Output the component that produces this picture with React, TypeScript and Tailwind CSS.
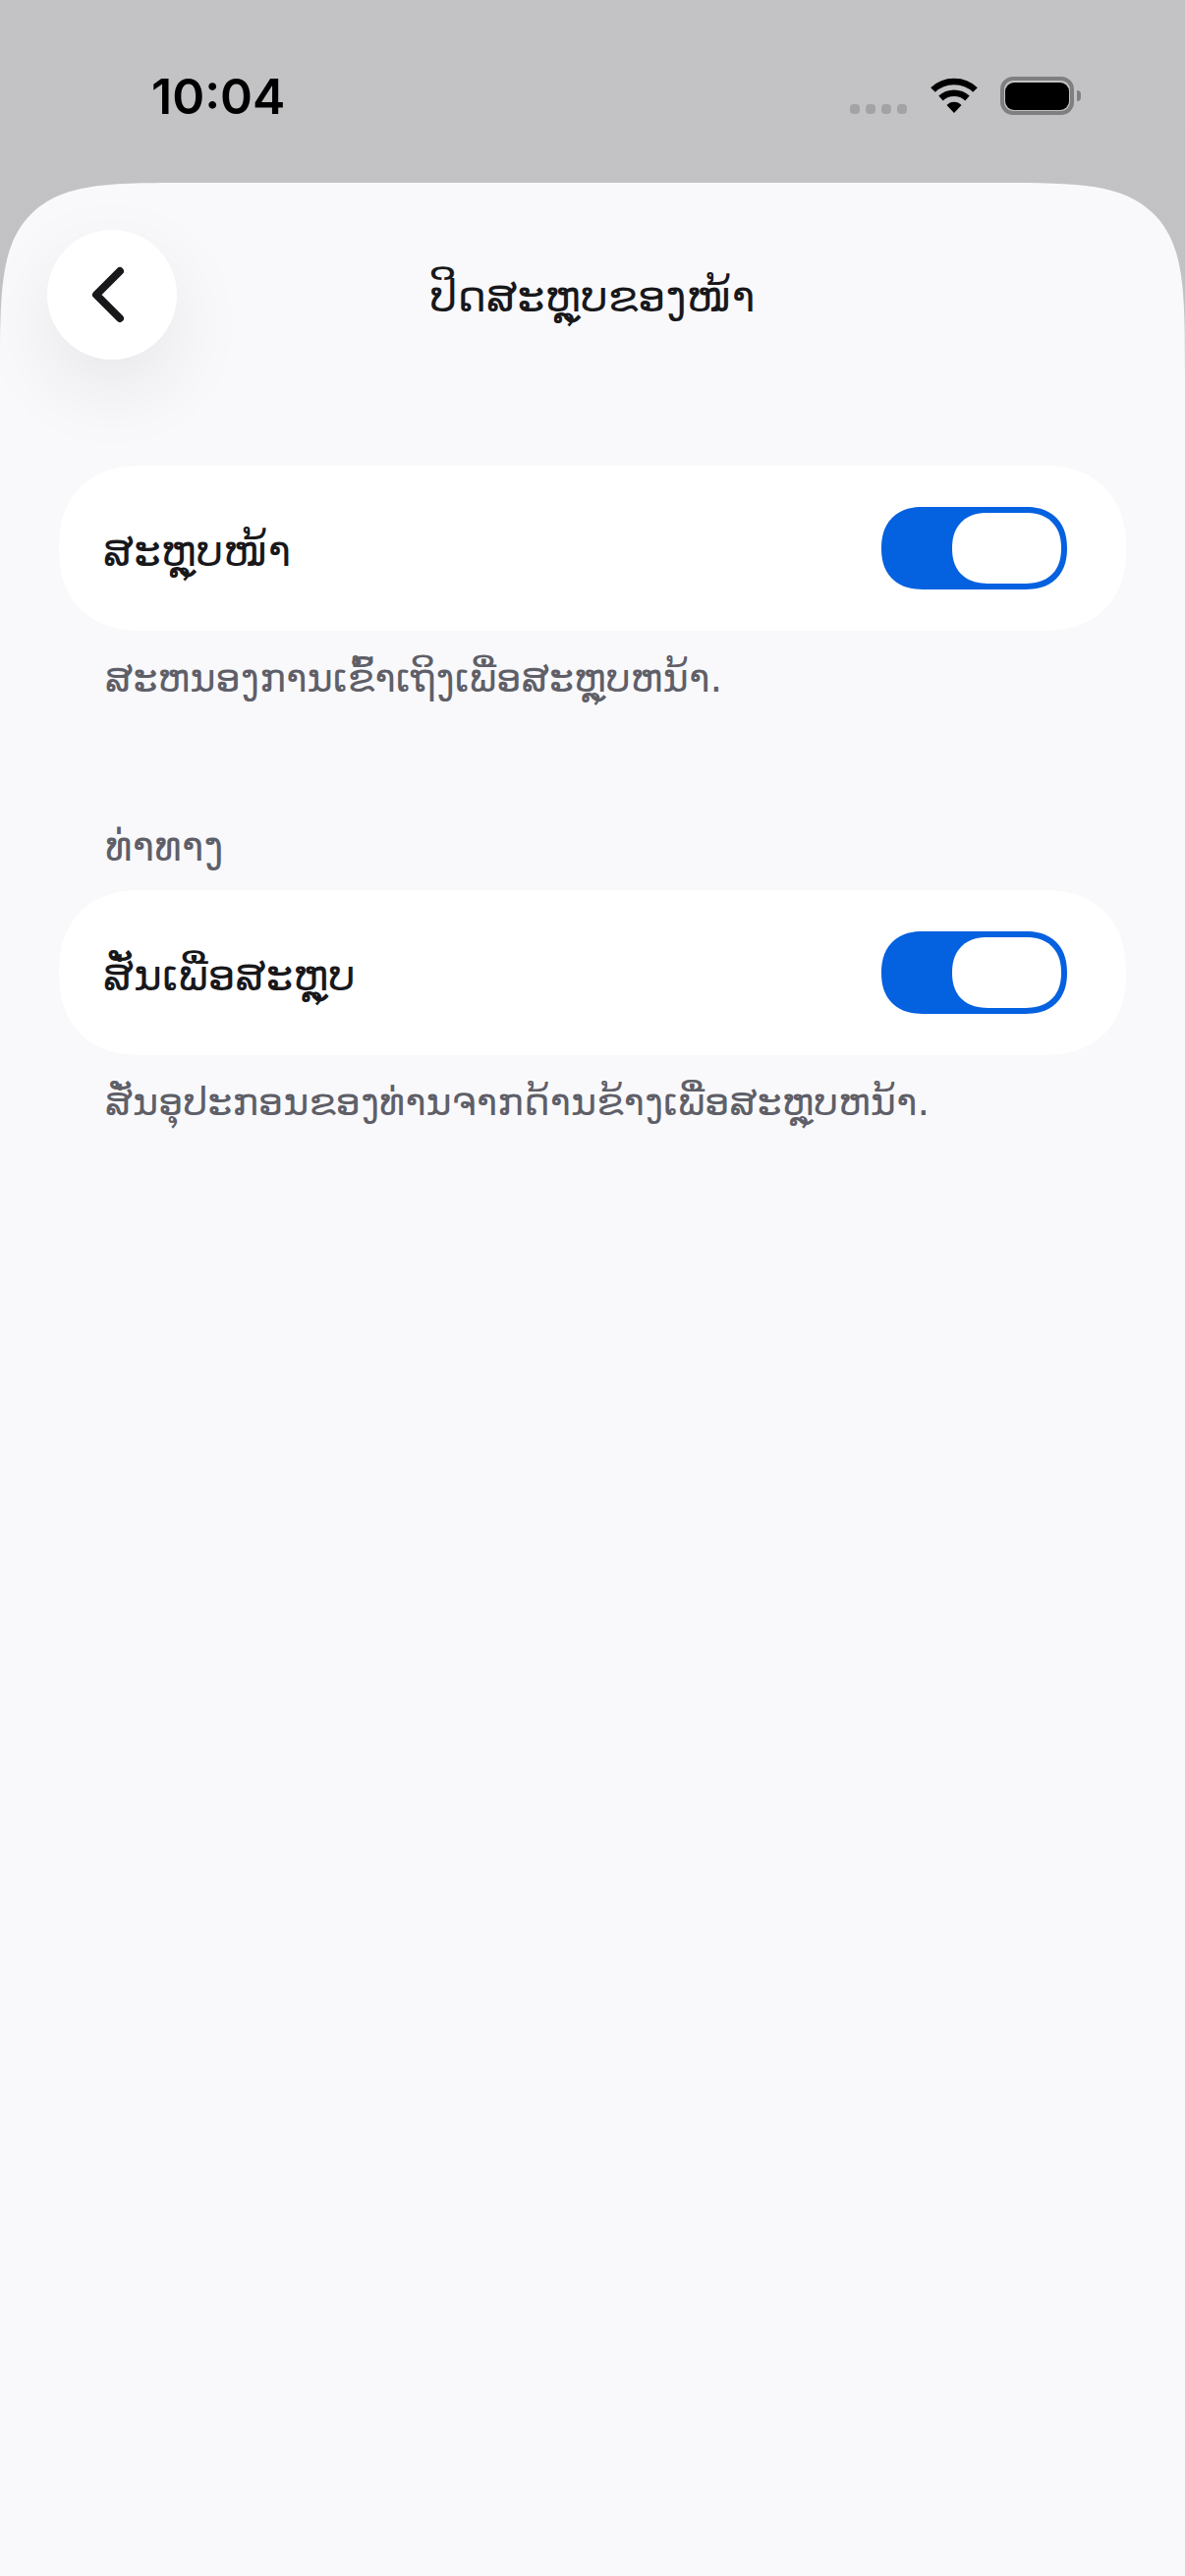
import { ChevronLeft } from "lucide-react";

const font = "font-['DejaVu_Sans',sans-serif]";

function Toggle() {
  return (
    <div className="flex h-[84px] w-[189px] items-center justify-end rounded-[42px] bg-[#0461e0] pr-[6px] [corner-shape:superellipse(1.2)]">
      <div className="h-[72px] w-[111px] rounded-[36px] bg-white [corner-shape:superellipse(1.2)]" />
    </div>
  );
}

function ToggleCard({ label }: { label: string }) {
  return (
    <div className="flex h-[168px] items-center justify-between rounded-[84px] bg-white pl-[45px] pr-[60px] [corner-shape:superellipse(1.2)]">
      <span className="pt-[6px] text-[44px] leading-[60px] text-[#18181b]">{label}</span>
      <Toggle />
    </div>
  );
}

function StatusBar() {
  return (
    <div className="flex h-[186px] items-start justify-between pl-[154px] pr-[106px] pt-[68px]">
      <span className="font-['Inter',sans-serif] text-[50px] font-semibold leading-[60px] text-black">10:04</span>
      <div className="flex items-start pt-[10px]">
        <div className="mt-[28px] flex gap-[6px]">
          <div className="h-[10px] w-[10px] rounded-[4px] bg-[#a3a3a5]" />
          <div className="h-[10px] w-[10px] rounded-[4px] bg-[#a3a3a5]" />
          <div className="h-[10px] w-[10px] rounded-[4px] bg-[#a3a3a5]" />
          <div className="h-[10px] w-[10px] rounded-[4px] bg-[#a3a3a5]" />
        </div>
        <svg className="ml-[23px]" width="50" height="37" viewBox="0 0 50 37">
          <path d="M3.5 13.5C15 2 35 2 46.5 13.5" fill="none" stroke="#000" strokeWidth="6.5" />
          <path d="M11.5 22C19 15 31 15 38.5 22" fill="none" stroke="#000" strokeWidth="6.5" />
          <path d="M17.5 29C21 24.5 29 24.5 32.5 29L25 37Z" fill="#000" />
        </svg>
        <div className="ml-[22px] flex h-[39px] w-[75px] items-center justify-center rounded-[13px] border-[4px] border-[#7f7f81]">
          <div className="h-[28px] w-[65px] rounded-[9px] bg-black" />
        </div>
        <div className="ml-[3px] mt-[14px] h-[11px] w-[4px] rounded-r-full bg-[#7f7f81]" />
      </div>
    </div>
  );
}

export default function App() {
  return (
    <div className={`h-[2622px] w-[1206px] overflow-hidden bg-gradient-to-b from-[#c3c3c5] to-[#bababc] ${font}`}>
      <StatusBar />
      <div className="h-[2436px] rounded-t-[200px] bg-[#f9f9fc] px-[60px] pt-[48px] [corner-shape:squircle]">
        <div className="relative flex h-[132px] items-center justify-center">
          <div className="absolute left-[-12px] top-0 flex h-[132px] w-[132px] items-center justify-center rounded-full bg-white shadow-[0_30px_80px_rgba(0,0,0,0.08)]">
            <ChevronLeft size={96} strokeWidth={2} className="mr-[8px] text-[#18181b]" />
          </div>
          <h1 className="pt-[4px] text-[44.5px] font-normal leading-[60px] text-[#18181b]">ປິດສະຫຼຸບຂອງໜ້າ</h1>
        </div>

        <div className="mt-[108px]">
          <ToggleCard label="ສະຫຼຸບໜ້າ" />
          <p className="mt-[18px] pl-[47px] text-[40px] leading-[60px] text-[#5f5f68]">ສະຫນອງການເຂົ້າເຖິງເພື່ອສະຫຼຸບຫນ້າ.</p>
        </div>

        <div className="mt-[112px]">
          <p className="mb-[14px] pl-[47px] text-[42px] leading-[60px] text-[#5f5f68]">ທ່າທາງ</p>
          <ToggleCard label="ສັ່ນເພື່ອສະຫຼຸບ" />
          <p className="mt-[17px] pl-[47px] text-[39.8px] leading-[60px] text-[#5f5f68]">ສັ່ນອຸປະກອນຂອງທ່ານຈາກດ້ານຂ້າງເພື່ອສະຫຼຸບຫນ້າ.</p>
        </div>
      </div>
    </div>
  );
}
